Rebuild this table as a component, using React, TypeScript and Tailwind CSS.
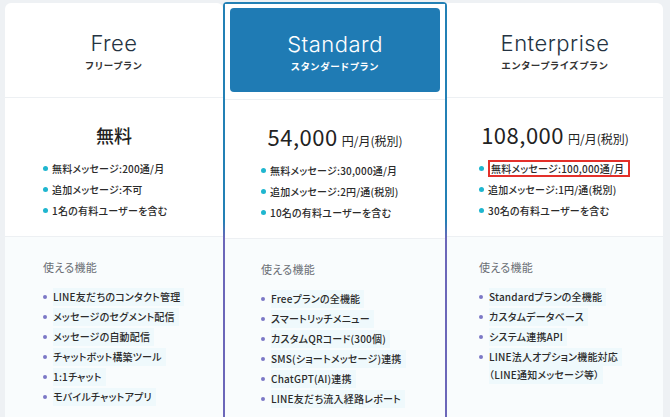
import React from 'react';

type Plan = {
  name: string;
  sub: string;
  price?: string;
  free?: boolean;
  bullets: string[];
  features: string[][];
  highlightFirst?: boolean;
};

const PLANS: Plan[] = [
  {
    name: 'Free',
    sub: 'フリープラン',
    free: true,
    bullets: ['無料メッセージ:200通/月', '追加メッセージ:不可', '1名の有料ユーザーを含む'],
    features: [
      ['LINE友だちのコンタクト管理'],
      ['メッセージのセグメント配信'],
      ['メッセージの自動配信'],
      ['チャットボット構築ツール'],
      ['1:1チャット'],
      ['モバイルチャットアプリ'],
    ],
  },
  {
    name: 'Standard',
    sub: 'スタンダードプラン',
    price: '54,000',
    bullets: ['無料メッセージ:30,000通/月', '追加メッセージ:2円/通(税別)', '10名の有料ユーザーを含む'],
    features: [
      ['Freeプランの全機能'],
      ['スマートリッチメニュー'],
      ['カスタムQRコード(300個)'],
      ['SMS(ショートメッセージ)連携'],
      ['ChatGPT(AI)連携'],
      ['LINE友だち流入経路レポート'],
    ],
  },
  {
    name: 'Enterprise',
    sub: 'エンタープライズプラン',
    price: '108,000',
    highlightFirst: true,
    bullets: ['無料メッセージ:100,000通/月', '追加メッセージ:1円/通(税別)', '30名の有料ユーザーを含む'],
    features: [
      ['Standardプランの全機能'],
      ['カスタムデータベース'],
      ['システム連携API'],
      ['LINE法人オプション機能対応', '（LINE通知メッセージ等）'],
    ],
  },
];

const PlanBody: React.FC<{ plan: Plan; pad: string }> = ({ plan, pad }) => (
  <>
    {/* price */}
    <div className="h-[139px] border-t border-[#edf0f3] bg-white">
      <div className="h-[47px] flex items-end justify-center">
        {plan.free ? (
          <span className="text-[18px] font-medium text-[#222] leading-none pb-[1px]">無料</span>
        ) : (
          <span className="flex items-baseline gap-[4px] text-[#222]">
            <span className="text-[22px] leading-none tracking-[0.5px]">{plan.price}</span>
            <span className="text-[12px] leading-none">円/月(税別)</span>
          </span>
        )}
      </div>
      <ul className={`mt-[13px] ${pad}`}>
        {plan.bullets.map((b, i) => (
          <li key={b} className="h-[21px] flex items-center gap-[4px] text-[10px] font-medium text-[#2b2b2b] tracking-[0.2px]">
            <span className="w-[5px] h-[5px] rounded-full bg-[#1fb6cf] shrink-0" />
            <span
              className={
                plan.highlightFirst && i === 0
                  ? 'border-2 border-[#e3302a] pl-[1px] pr-[4px] leading-[13px]'
                  : 'leading-[13px]'
              }
            >
              {b}
            </span>
          </li>
        ))}
      </ul>
    </div>
    {/* features */}
    <div className={`border-t border-[#edf0f3] bg-[#f9fcfd] pt-[21px] h-[200px] ${pad}`}>
      <div className="text-[11px] text-[#6b6f75] tracking-[0.3px] leading-[18px]">使える機能</div>
      <ul className="mt-[12px] flex flex-col gap-[2px]">
        {plan.features.map((f) => (
          <li key={f[0]} className="flex items-start gap-[6px] text-[10px] font-medium text-[#2b2b2b] tracking-[0.2px]">
            <span className="w-[4px] h-[4px] rounded-full bg-[#7c78c6] shrink-0 mt-[7px]" />
            <span className="flex flex-col">
              {f.map((line) => (
                <span key={line} className="leading-[18px] bg-[#eff9fc] pr-[4px] w-fit">{line}</span>
              ))}
            </span>
          </li>
        ))}
      </ul>
    </div>
  </>
);

const Head: React.FC<{ plan: Plan; light?: boolean }> = ({ plan, light }) => (
  <>
    <div className={`text-[22px] font-light tracking-[0.5px] leading-none font-['Inter','Noto_Sans_CJK_JP',sans-serif] ${light ? 'text-white' : 'text-[#243342]'}`}>
      {plan.name}
    </div>
    <div className={`mt-[7px] text-[9.5px] font-bold tracking-[1px] leading-none ${light ? 'text-white' : 'text-[#333]'}`}>
      {plan.sub}
    </div>
  </>
);

const App: React.FC = () => {
  const [free, standard, enterprise] = PLANS;
  return (
    <div className="w-[670px] h-[417px] overflow-hidden bg-[#eef1f4] flex items-start pl-[5px] pt-[2px] font-['Noto_Sans_CJK_JP','Noto_Sans',sans-serif] [font-feature-settings:'palt']">
      {/* Free */}
      <div className="w-[218px] mt-[1px] bg-white rounded-t-[6px] overflow-hidden">
        <div className="h-[94px] flex flex-col items-center justify-center pt-[3px]">
          <Head plan={free} />
        </div>
        <PlanBody plan={free} pad="pl-[38px] pr-[8px]" />
      </div>

      {/* Standard */}
      <div className="w-[224px] p-[2px] rounded-t-[4px] bg-[linear-gradient(to_bottom,#2380b5_0%,#2380b5_50%,#6c67b9_54%,#6c67b9_100%)]">
        <div className="bg-white">
          <div className="h-[95px] pt-[4px] px-[5px]">
            <div className="h-[84px] rounded-[4px] bg-[#1f7bb4] flex flex-col items-center justify-center pt-[4px]">
              <Head plan={standard} light />
            </div>
          </div>
          <PlanBody plan={standard} pad="pl-[36px] pr-[8px]" />
        </div>
      </div>

      {/* Enterprise */}
      <div className="w-[216px] mt-[1px] bg-white rounded-tr-[6px] overflow-hidden">
        <div className="h-[94px] flex flex-col items-center justify-center pt-[3px]">
          <Head plan={enterprise} />
        </div>
        <PlanBody plan={enterprise} pad="pl-[32px] pr-[6px]" />
      </div>
    </div>
  );
};

export default App;
